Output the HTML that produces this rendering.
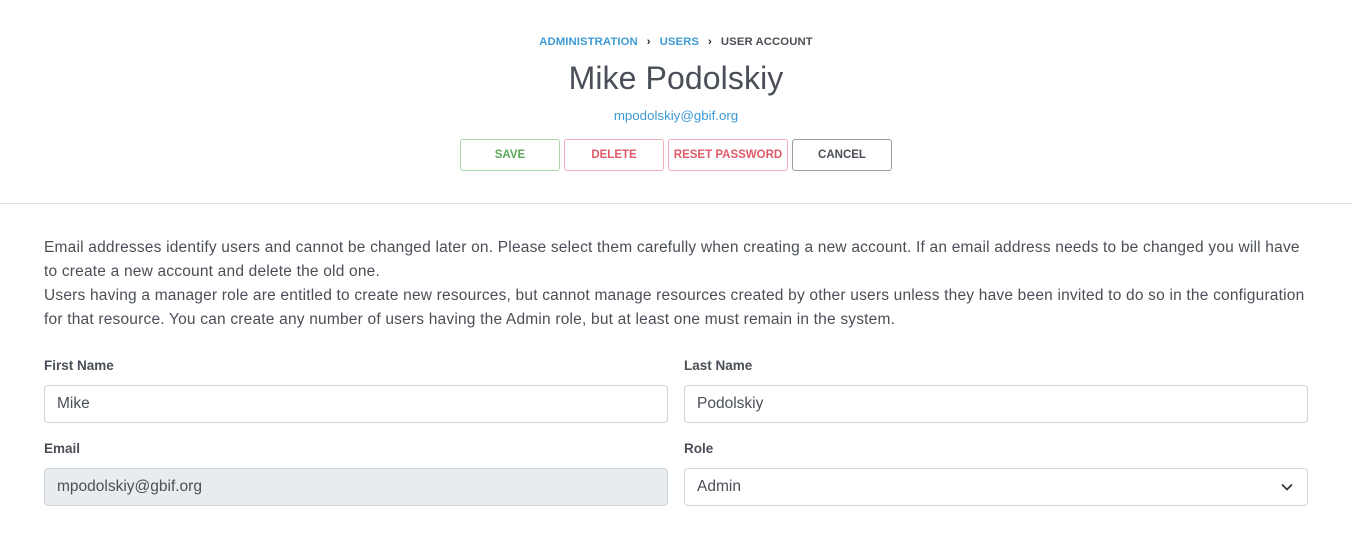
<!DOCTYPE html>
<html><head><style>
*{box-sizing:border-box;margin:0;padding:0}
body{width:1352px;height:547px;background:#fff;font-family:"Liberation Sans",sans-serif;color:#4a4f57;position:relative;overflow:hidden}
.abs{position:absolute;white-space:nowrap}
.bc{top:36px;left:0;width:1352px;text-align:center;font-size:11.3px;font-weight:bold;letter-spacing:0.1px}
.bc a{color:#3d9ad4}.bc span.s{color:#222;margin:0 9px}
h1{position:absolute;top:60px;left:0;width:1352px;text-align:center;font-size:32px;font-weight:normal;color:#4a4f57;letter-spacing:0.1px}
.em{top:108px;left:0;width:1352px;text-align:center;font-size:13.3px;color:#3d9ad4}
.btn{position:absolute;top:139px;height:32px;border:1px solid;border-radius:3px;font-size:11.5px;font-weight:bold;display:flex;align-items:center;justify-content:center}
hr{position:absolute;top:203px;left:0;width:1352px;border:0;border-top:1px solid #dee2e6}
.p{left:44px;top:236px;width:1270px;font-size:15.5px;letter-spacing:0.2px;line-height:24px;white-space:normal;color:#4a4f57}
.lab{font-size:13.5px;font-weight:bold;color:#4a4f57}
.in{position:absolute;width:624px;height:38px;border:1px solid #ced4da;border-radius:4px;font-size:15.5px;padding:0 12px;display:flex;align-items:center;color:#4a4f57}
</style></head><body>
<div class="abs bc"><a>ADMINISTRATION</a><span class="s">›</span><a>USERS</a><span class="s">›</span>USER ACCOUNT</div>
<h1>Mike Podolskiy</h1>
<div class="abs em">mpodolskiy@gbif.org</div>
<div class="btn" style="left:460px;width:100px;border-color:#a8d8a8;color:#5aa95a">SAVE</div>
<div class="btn" style="left:564px;width:100px;border-color:#f0b0b6;color:#e05a68">DELETE</div>
<div class="btn" style="left:668px;width:120px;border-color:#f0b0b6;color:#e05a68">RESET PASSWORD</div>
<div class="btn" style="left:792px;width:100px;border-color:#9a9ea4;color:#4a4f57">CANCEL</div>
<hr>
<div class="abs p">Email addresses identify users and cannot be changed later on. Please select them carefully when creating a new account. If an email address needs to be changed you will have<br>to create a new account and delete the old one.<br>Users having a manager role are entitled to create new resources, but cannot manage resources created by other users unless they have been invited to do so in the configuration<br>for that resource. You can create any number of users having the Admin role, but at least one must remain in the system.</div>
<div class="abs lab" style="left:44px;top:358px">First Name</div>
<div class="abs lab" style="left:684px;top:358px">Last Name</div>
<div class="in" style="left:44px;top:385px">Mike</div>
<div class="in" style="left:684px;top:385px">Podolskiy</div>
<div class="abs lab" style="left:44px;top:441px">Email</div>
<div class="abs lab" style="left:684px;top:441px">Role</div>
<div class="in" style="left:44px;top:468px;background:#e9ecef">mpodolskiy@gbif.org</div>
<div class="in" style="left:684px;top:468px">Admin
<svg style="position:absolute;right:14px;top:14px" width="12" height="8" viewBox="0 0 12 8"><path d="M1 1.5l5 5 5-5" fill="none" stroke="#343a40" stroke-width="1.8"/></svg></div>
</body></html>
